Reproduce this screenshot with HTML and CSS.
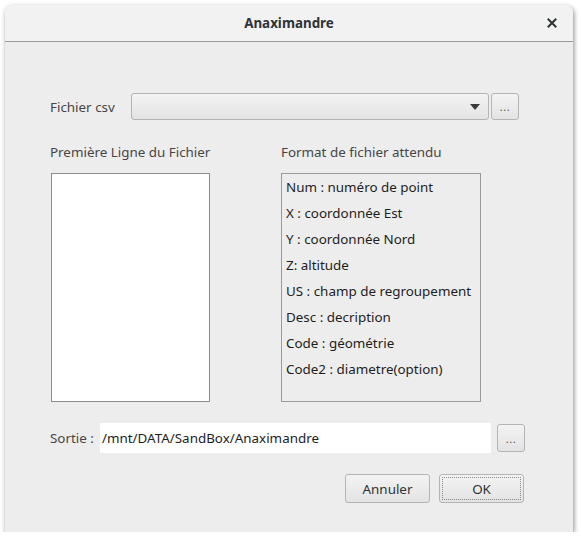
FILE: index.html
```html
<!DOCTYPE html>
<html>
<head>
<meta charset="utf-8">
<link rel="stylesheet" href="styles.css">
</head>
<body>
<div class="window">
  <div class="titlebar">
    <span class="title">Anaximandre</span>
    <span class="close"><svg width="10" height="10" viewBox="0 0 10 10"><path d="M1.5 1.5 L8.5 8.5 M8.5 1.5 L1.5 8.5" stroke="#2e3436" stroke-width="2" stroke-linecap="square"/></svg></span>
  </div>
  <div class="content">
    <div class="row-csv">
      <span class="lbl lbl-csv">Fichier csv</span>
      <div class="combo"><svg class="arrow" width="10" height="6" viewBox="0 0 10 6"><path d="M0 0 H10 L5 6 Z" fill="#3a3a3a"/></svg></div>
      <div class="btn btn-small">...</div>
    </div>
    <div class="cols">
      <div class="col col-left">
        <div class="lbl">Première Ligne du Fichier</div>
        <div class="preview"></div>
      </div>
      <div class="col col-right">
        <div class="lbl">Format de fichier attendu</div>
        <div class="format">
          <div class="fl">Num : numéro de point</div>
          <div class="fl">X : coordonnée Est</div>
          <div class="fl">Y : coordonnée Nord</div>
          <div class="fl">Z: altitude</div>
          <div class="fl">US : champ de regroupement</div>
          <div class="fl">Desc : decription</div>
          <div class="fl">Code : géométrie</div>
          <div class="fl">Code2 : diametre(option)</div>
        </div>
      </div>
    </div>
    <div class="row-out">
      <span class="lbl lbl-out">Sortie :</span>
      <div class="input">/mnt/DATA/SandBox/Anaximandre</div>
      <div class="btn btn-small">...</div>
    </div>
    <div class="row-btns">
      <div class="btn btn-big">Annuler</div>
      <div class="btn btn-big btn-ok"><span class="focus">OK</span></div>
    </div>
  </div>
</div>
</body>
</html>
```
FILE: styles.css
```css
* { box-sizing: border-box; }
html, body { margin: 0; padding: 0; background: #ffffff; }
body {
  padding: 5px 0 0 5px;
  font-family: "Noto Sans", "DejaVu Sans", sans-serif;
  font-size: 13.4px;
  color: #2e3436;
}
.window {
  width: 568px;
  height: 527px;
  background: #ededed;
  border-radius: 7px 7px 0 0;
  box-shadow: 1px 2px 5px rgba(0,0,0,0.45);
  overflow: hidden;
  display: flex;
  flex-direction: column;
}
.titlebar {
  height: 37px;
  flex: none;
  background: #f2f2f2;
  border-bottom: 1px solid #9a9a9a;
  display: flex;
  align-items: center;
  justify-content: center;
  position: relative;
}
.title {
  font-weight: bold;
  font-size: 13.4px;
  color: #2e3436;
}
.close {
  position: absolute;
  left: 542px;
  top: 13px;
  width: 10px;
  height: 10px;
  display: flex;
}
.content {
  padding-left: 45px;
  display: flex;
  flex-direction: column;
}
.lbl { color: #464646; white-space: nowrap; }
.row-csv {
  margin-top: 51px;
  height: 27px;
  display: flex;
  align-items: center;
}
.lbl-csv { width: 81px; }
.combo {
  width: 358px;
  height: 27px;
  border: 1px solid #b4b4b4;
  border-radius: 3px;
  background: linear-gradient(#f3f3f3, #e3e3e3);
  position: relative;
  margin-right: 2px;
}
.arrow { position: absolute; right: 8px; top: 10px; }
.btn {
  border: 1px solid #b4b4b4;
  border-radius: 3px;
  background: linear-gradient(#f3f3f3, #e3e3e3);
  display: flex;
  align-items: center;
  justify-content: center;
  color: #2e3436;
}
.btn-small {
  width: 28px;
  height: 27px;
  font-size: 11px;
  letter-spacing: 0.5px;
  color: #555;
}
.cols {
  margin-top: 23px;
  display: flex;
}
.col { display: flex; flex-direction: column; }
.col-left { width: 231px; }
.col .lbl { height: 18px; line-height: 18px; }
.preview {
  margin-top: 12px;
  margin-left: 1px;
  width: 159px;
  height: 229px;
  background: #ffffff;
  border: 1px solid #8c8c8c;
}
.format {
  margin-top: 12px;
  width: 200px;
  height: 229px;
  border: 1px solid #9a9a9a;
  padding: 4px 0 0 4px;
}
.fl {
  height: 26px;
  line-height: 18px;
  color: #1e1e1e;
  white-space: nowrap;
}
.row-out {
  margin-top: 21px;
  height: 30px;
  display: flex;
  align-items: center;
}
.lbl-out { width: 50px; }
.input {
  width: 391px;
  height: 30px;
  background: #ffffff;
  padding-left: 2px;
  line-height: 30px;
  color: #1e1e1e;
  margin-right: 6px;
}
.row-out .btn-small { height: 28px; }
.row-btns {
  margin-top: 21px;
  display: flex;
  padding-left: 295px;
  gap: 9px;
}
.btn-big {
  width: 85px;
  height: 29px;
}
.btn-ok { padding: 2px; }
.focus {
  width: 100%;
  height: 100%;
  border: 1px dotted #8a8a8a;
  display: flex;
  align-items: center;
  justify-content: center;
}
```
